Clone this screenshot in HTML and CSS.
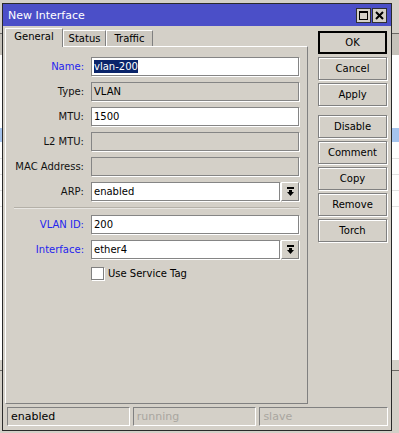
FILE: index.html
```html
<!DOCTYPE html>
<html lang="en">
<head>
    <meta charset="UTF-8">
    <title>New Interface</title>
    <link rel="stylesheet" href="styles.css">
</head>
<body>
<div class="desktop">

    <!-- list window behind the dialog, only its edges show -->
    <div class="strip strip-left">
        <div class="s-top"></div>
        <div class="s-head"></div>
        <div class="s-list">
            <div class="s-row tall"></div>
            <div class="s-row sel"></div>
            <div class="s-row"></div>
            <div class="s-row"></div>
            <div class="s-row"></div>
            <div class="s-row"></div>
        </div>
        <div class="s-bottom"></div>
    </div>

    <div class="window">
        <div class="titlebar">
            <span class="title">New Interface</span>
            <div class="title-btns">
                <span class="tbtn"><span class="max-icon"></span></span>
                <span class="tbtn">
                    <svg width="9" height="9" viewBox="0 0 9 9"><path d="M1 1L8 8M8 1L1 8" stroke="#000" stroke-width="2"/></svg>
                </span>
            </div>
        </div>

        <div class="win-body">
            <div class="main">
                <div class="left-col">
                    <div class="tabs">
                        <div class="tab active">General</div>
                        <div class="tab tab-status">Status</div>
                        <div class="tab tab-traffic">Traffic</div>
                    </div>
                    <div class="panel">
                        <div class="row">
                            <label class="lbl blue">Name:</label>
                            <div class="field"><span class="hl">vlan-200</span></div>
                        </div>
                        <div class="row">
                            <label class="lbl">Type:</label>
                            <div class="field off">VLAN</div>
                        </div>
                        <div class="row">
                            <label class="lbl">MTU:</label>
                            <div class="field">1500</div>
                        </div>
                        <div class="row">
                            <label class="lbl">L2 MTU:</label>
                            <div class="field off"></div>
                        </div>
                        <div class="row">
                            <label class="lbl">MAC Address:</label>
                            <div class="field off"></div>
                        </div>
                        <div class="row">
                            <label class="lbl">ARP:</label>
                            <div class="field short">enabled</div>
                            <div class="drop">
                                <svg width="9" height="9" viewBox="0 0 9 9"><rect x="1" y="0" width="7" height="2" fill="#000"/><path d="M3 3H6V5H8L4.5 9L1 5H3Z" fill="#000"/></svg>
                            </div>
                        </div>

                        <div class="sep"></div>

                        <div class="row">
                            <label class="lbl blue">VLAN ID:</label>
                            <div class="field">200</div>
                        </div>
                        <div class="row">
                            <label class="lbl blue">Interface:</label>
                            <div class="field short">ether4</div>
                            <div class="drop">
                                <svg width="9" height="9" viewBox="0 0 9 9"><rect x="1" y="0" width="7" height="2" fill="#000"/><path d="M3 3H6V5H8L4.5 9L1 5H3Z" fill="#000"/></svg>
                            </div>
                        </div>
                        <div class="row check-row">
                            <span class="lbl"></span>
                            <span class="checkbox"></span>
                            <span class="check-text">Use Service Tag</span>
                        </div>
                    </div>
                </div>

                <div class="buttons">
                    <div class="btn default">OK</div>
                    <div class="btn">Cancel</div>
                    <div class="btn">Apply</div>
                    <div class="btn gap">Disable</div>
                    <div class="btn">Comment</div>
                    <div class="btn">Copy</div>
                    <div class="btn">Remove</div>
                    <div class="btn">Torch</div>
                </div>
            </div>

            <div class="statusbar">
                <div class="cell c1">enabled</div>
                <div class="cell c2 dim">running</div>
                <div class="cell c3 dim">slave</div>
            </div>
        </div>
    </div>

    <div class="strip strip-right">
        <div class="s-top"></div>
        <div class="s-head"></div>
        <div class="s-list">
            <div class="s-row tall"></div>
            <div class="s-row sel"></div>
            <div class="s-row"></div>
            <div class="s-row"></div>
            <div class="s-row"></div>
            <div class="s-row"></div>
        </div>
        <div class="s-bottom"></div>
    </div>

</div>
</body>
</html>
```

FILE: styles.css
```css
body {
    margin: 0;
    background: #d4d0c8;
    font-family: "DejaVu Sans", sans-serif;
    font-size: 10px;
    color: #000;
}

.desktop {
    display: flex;
    height: 433px;
    overflow: hidden;
}

/* edges of the window behind */
.strip {
    display: flex;
    flex-direction: column;
    flex: none;
}
.strip-left { width: 2px; }
.strip-right { width: 7px; }

.s-top {
    height: 33px;
    background: #d4d0c8;
    border-bottom: 1px solid #6c6a66;
}
.s-head {
    height: 21px;
    background: #c6c2ba;
}
.s-list {
    height: 305px;
    background: #fff;
}
.s-row {
    height: 15px;
    border-bottom: 1px solid #e2e2e2;
}
.s-row.tall {
    height: 73px;
    border-bottom: none;
}
.s-row.sel {
    height: 14px;
    background: #a6c4ee;
    border-bottom: 1px solid #fff;
}
.s-bottom {
    flex: 1;
    background: #d4d0c8;
    border-top: 10px solid #d4d0c8;
    box-shadow: inset 0 1px 0 #6c6a66;
}

/* dialog */
.window {
    flex: none;
    width: 390px;
    height: 428px;
    margin-top: 3px;
    box-sizing: border-box;
    border: 1px solid #2a2a2a;
    background: #d4d0c8;
    display: flex;
    flex-direction: column;
}

.titlebar {
    height: 22px;
    flex: none;
    background: #4b4fc8;
    display: flex;
    align-items: center;
    justify-content: space-between;
    padding: 0 4px 0 5px;
}
.title {
    color: #fff;
    font-size: 11px;
}
.title-btns {
    display: flex;
    gap: 1px;
}
.tbtn {
    width: 15px;
    height: 15px;
    box-sizing: border-box;
    border: 1px solid #303030;
    background: #d4d0c8;
    display: flex;
    align-items: center;
    justify-content: center;
}
.max-icon {
    width: 9px;
    height: 9px;
    box-sizing: border-box;
    border: 1px solid #000;
    border-top-width: 2px;
}

.win-body {
    flex: 1;
    display: flex;
    flex-direction: column;
    padding: 2px 3px 4px 2px;
}

.main {
    flex: 1;
    display: flex;
}

.left-col {
    width: 303px;
    display: flex;
    flex-direction: column;
}

.tabs {
    display: flex;
    align-items: flex-end;
    height: 18px;
}
.tab {
    height: 16px;
    box-sizing: border-box;
    border: 1px solid #fff;
    border-right-color: #808080;
    border-bottom: none;
    background: #cdc9c1;
    text-align: center;
    line-height: 15px;
}
.tab.active {
    width: 58px;
    height: 19px;
    margin-bottom: -1px;
    position: relative;
    z-index: 1;
    background: #d4d0c8;
    line-height: 16px;
}
.tab-status { width: 43px; }
.tab-traffic { width: 47px; }

.panel {
    flex: 1;
    border: 1px solid;
    border-color: #fff #808080 #808080 #fff;
    padding-top: 10px;
}

.row {
    display: flex;
    align-items: center;
    height: 19px;
    margin-bottom: 6px;
}
.lbl {
    width: 78px;
    flex: none;
    text-align: right;
    margin-right: 7px;
    color: #111;
}
.lbl.blue {
    color: #2424ee;
}

.field {
    width: 208px;
    height: 19px;
    box-sizing: border-box;
    border: 1px solid #858585;
    box-shadow: 1px 1px 0 #fff;
    background: #fff;
    padding: 0 2px;
    line-height: 17px;
    white-space: nowrap;
}
.field.off {
    background: #d4d0c8;
}
.field.short {
    width: 189px;
}
.hl {
    background: #0a246a;
    color: #fff;
    display: inline-block;
    line-height: 13px;
}

.drop {
    width: 18px;
    height: 19px;
    box-sizing: border-box;
    margin-left: 1px;
    border: 1px solid;
    border-color: #fff #808080 #808080 #fff;
    box-shadow: 1px 1px 0 #fff;
    display: flex;
    align-items: center;
    justify-content: center;
}

.sep {
    height: 1px;
    margin: 2px 8px 7px 8px;
    background: #b4b0a8;
    box-shadow: 0 1px 0 #e8e6e2;
}

.check-row {
    height: 16px;
}
.checkbox {
    width: 13px;
    height: 13px;
    box-sizing: border-box;
    border: 1px solid #808080;
    box-shadow: 1px 1px 0 #fff;
    background: #fff;
}
.check-text {
    margin-left: 4px;
    font-size: 10px;
}

.buttons {
    width: 69px;
    margin-left: 10px;
    padding-top: 3px;
    display: flex;
    flex-direction: column;
    gap: 3px;
}
.btn {
    height: 23px;
    box-sizing: border-box;
    border: 1px solid #808080;
    box-shadow: 1px 1px 0 #fff, inset 1px 1px 0 #fff;
    text-align: center;
    line-height: 21px;
}
.btn.default {
    border: 2px solid #000;
    box-shadow: none;
    line-height: 19px;
}
.btn.gap {
    margin-top: 6px;
}

.statusbar {
    display: flex;
    gap: 3px;
    margin-top: 3px;
    padding-left: 2px;
}
.cell {
    height: 19px;
    box-sizing: border-box;
    border: 1px solid;
    border-color: #808080 #fff #fff #808080;
    padding-left: 3px;
    line-height: 17px;
    font-size: 11px;
}
.c1 { width: 124px; }
.c2 { width: 125px; }
.c3 { width: 130px; }
.dim { color: #a9a6a0; }
```
